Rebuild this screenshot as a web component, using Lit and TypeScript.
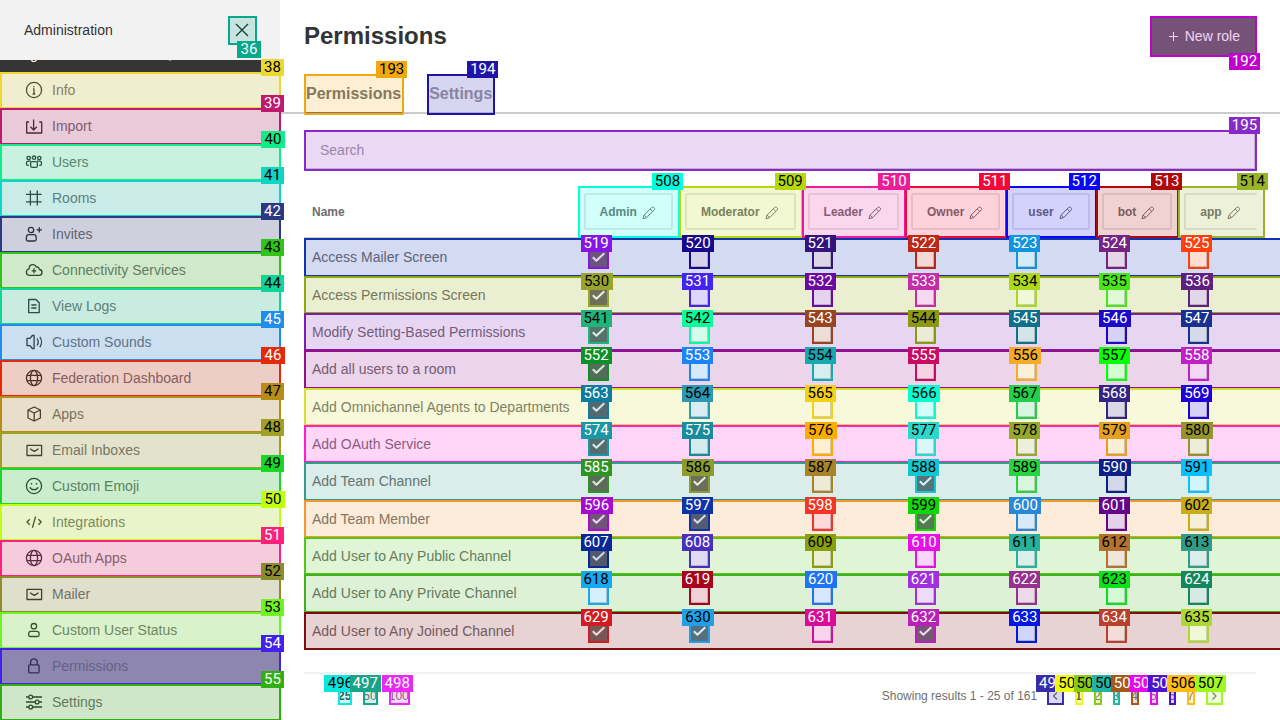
import { LitElement, html, css, svg, nothing } from "lit";
import { customElement } from "lit/decorators.js";
import { styleMap } from "lit/directives/style-map.js";
import { classMap } from "lit/directives/class-map.js";

const icons: Record<string, unknown> = {
  info: svg`<circle cx="10" cy="10" r="7.6"/><path d="M9 9h1v5M8.6 14h2.6M9.8 6v1.2"/>`,
  import: svg`<path d="M5 6H2.7v11h15V6h-2.4M9.6 3.5V14M6.4 10.8l3.2 3.2 3.2-3.2"/>`,
  users: svg`<circle cx="4.7" cy="6" r="1.7"/><circle cx="10" cy="5.7" r="1.7"/><circle cx="15.3" cy="6" r="1.7"/><rect x="6.6" y="9.6" width="6.8" height="5.8" rx="1.6"/><path d="M7 9.200H4.2c-1 0-1.7.7-1.7 1.700v1.200c0 .8.6 1.300 1.300 1.300h1M13 9.200h2.800c1 0 1.700.7 1.700 1.700v1.200c0 .8-.6 1.300-1.300 1.300h-1"/>`,
  hash: svg`<path d="M6.4 2.600v15M13.300 2.600v15M2 6.400h15.600M2 13.800h15.600"/>`,
  invite: svg`<circle cx="7" cy="6" r="2.700"/><path d="M4.600 10.700h5c1.600 0 2.600 1.200 2.600 2.800v2c0 .9-.6 1.500-1.500 1.500H3.900c-.9 0-1.500-.6-1.500-1.500v-2c0-1.600 1-2.800 2.200-2.800zM15.300 3.200v5.400M12.600 5.900H18"/>`,
  cloud: svg`<path d="M5.300 15.300h9.600a2.900 2.900 0 0 0 .4-5.800c.2-1.800-1.400-2.900-2.900-2.300C11.600 5.200 10 4.300 8.200 4.700 6.200 5.100 5 6.700 5.200 8.800c-1.600.2-2.800 1.500-2.800 3.300 0 1.900 1.200 3.200 2.900 3.200zM10 8.300v5M7.700 10.800h4.600"/>`,
  log: svg`<path d="M4.700 3.500h7.200l3.300 3.300v9.900H4.700zM7.300 9h5.200M7.300 12h5.200"/>`,
  sound: svg`<path d="M3 6.400h3l2.300-2.900h1.800v13H8.300L6 13.600H3zM13 6.500c1.400 2 1.400 5 0 7M15.800 4.800c2.200 3 2.200 7.400 0 10.400"/>`,
  globe: svg`<circle cx="10" cy="10" r="7.600"/><ellipse cx="10" cy="10" rx="3.600" ry="7.600"/><path d="M3 7.400h14M3 12.700h14"/>`,
  cube: svg`<path d="M10.200 3l6.200 3v8l-6.200 3L4 14V6zM4 6l6.200 3 6.200-3M10.200 9v8"/>`,
  mail: svg`<path d="M3 5.300h14.600v10.200H3zM6 8.700l4.300 2.700 4.300-2.700"/>`,
  emoji: svg`<circle cx="10" cy="10" r="7.600"/><path d="M7.500 7v1.500M12.500 7v1.500M5.900 11.300c1.200 3.200 7 3.200 8.200 0"/>`,
  code: svg`<path d="M5.800 7.200L3 10l2.800 2.800M14.400 7.200l2.800 2.800-2.800 2.800M11.600 4.500L8.400 15.700"/>`,
  user: svg`<circle cx="9.900" cy="6.200" r="2.700"/><path d="M7 11.300h5.800c1.400 0 2.300 1 2.300 2.400v1.300c0 .9-.6 1.500-1.500 1.500H6.200c-.9 0-1.500-.6-1.500-1.500v-1.300c0-1.400.9-2.400 2.300-2.400z"/>`,
  lock: svg`<rect x="4.700" y="8.800" width="10.400" height="8" rx="1"/><path d="M6.600 8.800V6.200a3.300 3.300 0 0 1 6.600 0v2.600"/>`,
  sliders: svg`<circle cx="6.700" cy="5" r="1.900"/><circle cx="13.100" cy="10" r="1.900"/><circle cx="6.700" cy="15" r="1.900"/><path d="M2 5h2.800M8.600 5H18M2 10h9.200M15 10h3M2 15h2.800M8.600 15H18"/>`,
};

const navItems: [number, string, string, string][] = [
  [38, "Info", "info", "#ecd830"],
  [39, "Import", "import", "#c0186c"],
  [40, "Users", "users", "#10ec88"],
  [41, "Rooms", "hash", "#10d4c4"],
  [42, "Invites", "invite", "#2c3884"],
  [43, "Connectivity Services", "cloud", "#30c418"],
  [44, "View Logs", "log", "#10d498"],
  [45, "Custom Sounds", "sound", "#208cec"],
  [46, "Federation Dashboard", "globe", "#e42808"],
  [47, "Apps", "cube", "#b88c18"],
  [48, "Email Inboxes", "mail", "#a0a024"],
  [49, "Custom Emoji", "emoji", "#18d828"],
  [50, "Integrations", "code", "#c0ff10"],
  [51, "OAuth Apps", "globe", "#ff207c"],
  [52, "Mailer", "mail", "#8c8c2c"],
  [53, "Custom User Status", "user", "#70f420"],
  [54, "Permissions", "lock", "#4420ec"],
  [55, "Settings", "sliders", "#30b010"],
];

const roles: [number, string, string][] = [
  [508, "Admin", "#00ffdc"],
  [509, "Moderator", "#b4d808"],
  [510, "Leader", "#ec1c98"],
  [511, "Owner", "#f40838"],
  [512, "user", "#0808f4"],
  [513, "bot", "#b00808"],
  [514, "app", "#98b428"],
];

// Row name, row colour, number of its first tick box, ticked columns, tick box colours
const rows: [string, string, number, number[], string[]][] = [
  ["Access Mailer Screen", "#1034b0", 519, [0], ["#8814e4", "#18088c", "#34147c", "#bc2818", "#1094e0", "#742480", "#ff400c"]],
  ["Access Permissions Screen", "#90a808", 530, [0], ["#98a42c", "#4424f0", "#6c08a4", "#c42ca8", "#acd81c", "#48e818", "#602080"]],
  ["Modify Setting-Based Permissions", "#7c1cb8", 541, [0], ["#1eb47c", "#0cfc9c", "#984420", "#8c9814", "#10708c", "#1c08c8", "#183090"]],
  ["Add all users to a room", "#941088", 552, [0], ["#0c9028", "#1c84f4", "#18a8b0", "#c80c64", "#f4ac28", "#08ff08", "#c020c8"]],
  ["Add Omnichannel Agents to Departments", "#d4e030", 563, [0], ["#0c7ca0", "#2c98b4", "#f4d018", "#08fcd0", "#20d048", "#342484", "#2000d8"]],
  ["Add OAuth Service", "#ff1cd0", 574, [0], ["#1898a4", "#188c9c", "#ffac00", "#2cd8cc", "#94a82c", "#e4a020", "#94942c"]],
  ["Add Team Channel", "#349c88", 585, [0, 1, 3], ["#309424", "#8c9c30", "#a88428", "#10c8d0", "#28d440", "#0c2088", "#08c0ff"]],
  ["Add Team Member", "#f0982c", 596, [0, 1, 3], ["#a40cd0", "#1034a8", "#f43424", "#10d808", "#2888d8", "#640488", "#c8ac18"]],
  ["Add User to Any Public Channel", "#50c81c", 607, [0], ["#082898", "#4830b8", "#88a00c", "#e810e8", "#28b09c", "#b07430", "#309c88"]],
  ["Add User to Any Private Channel", "#40b01c", 618, [], ["#18a8f0", "#a80420", "#2074f4", "#a030dc", "#983090", "#0ce018", "#14885c"]],
  ["Add User to Any Joined Channel", "#800c10", 629, [0, 1, 3], ["#d01c20", "#20a0e8", "#d80c98", "#b820b8", "#0018e0", "#b8402c", "#b0d834"]],
];

const pageColors = ["#ecfc10", "#88cc14", "#24b4a4", "#a4581c", "#e808ec", "#4c14c8", "#ffbc18"];

function tagInk(color: string) {
  const [r, g, b] = [1, 3, 5].map((i) => parseInt(color.slice(i, i + 2), 16));
  return 0.299 * r + 0.587 * g + 0.114 * b > 121 ? "#000" : "#fff";
}

/** Coloured outline with a numbered tag, laid over its positioned parent. */
function mark(color: string, id?: number, kind = "") {
  return html`<span class="box ${kind}" aria-hidden="true" style=${styleMap({ "--mark": color })}></span>${id === undefined
      ? nothing
      : html`<span
          aria-hidden="true"
          class=${classMap({ tag: true, short: id < 100, wide: id % 10 === 0 || id % 10 === 6, below: kind === "below" })}
          style=${styleMap({ "--mark": color, "--ink": tagInk(color) })}
          >${id}</span
        >`}`;
}

@customElement("app-root")
export class AppRoot extends LitElement {
  static styles = css`
    :host {
      display: flex;
      height: 100vh;
      overflow: hidden;
      background: #fff;
      color: #6e6e6e;
      font: 14px/20px "Liberation Sans", Arial, sans-serif;
    }
    * { box-sizing: border-box; }
    button, input { font: inherit; color: inherit; margin: 0; }
    button { border: 0; padding: 0; background: none; cursor: pointer; }
    svg { display: block; flex: none; fill: none; stroke: currentColor; stroke-width: 1.3; stroke-linejoin: round; }
    .marked { position: relative; }
    .box {
      position: absolute;
      inset: 0 -1px -1px 0;
      z-index: 1;
      border: 2px solid var(--mark);
      pointer-events: none;
    }
    .box::before {
      content: "";
      position: absolute;
      inset: 0;
      background: var(--mark);
      opacity: 0.18;
    }
    .box.over { z-index: 2; }
    .box.row { right: -24px; }
    .box.ruled { bottom: -3px; }
    .tag {
      position: absolute;
      top: -13px;
      left: calc(100% - 27px);
      z-index: 3;
      width: 31px;
      height: 17px;
      background: var(--mark);
      color: var(--ink);
      font: 15px/17px Roboto, sans-serif;
      text-align: center;
      pointer-events: none;
    }
    .tag.wide { width: 32px; }
    .tag.short { left: calc(100% - 19px); width: 23px; }
    .tag.short.wide { width: 24px; }
    .tag.below { top: calc(100% - 3px); }

    .side { flex: none; width: 280px; background: #f2f2f2; }
    .side-head {
      display: flex;
      align-items: flex-start;
      justify-content: space-between;
      height: 60px;
      padding: 16px 24px;
      color: #333;
    }
    .side-title { margin: 0; font: inherit; line-height: 28px; }
    .close { display: grid; place-items: center; width: 28px; height: 28px; color: #222; background: #f2f2f2; }
    .banner {
      display: flex;
      justify-content: space-between;
      height: 12px;
      padding: 0 108px 0 30px;
      overflow: hidden;
      background: #353535;
      color: #fff;
      align-items: flex-end;
      line-height: 36px;
    }
    .nav { margin: 0; padding: 0; list-style: none; }
    .nav-link {
      display: flex;
      align-items: center;
      gap: 8px;
      height: 36px;
      padding: 0 24px;
      color: inherit;
      text-decoration: none;
    }
    .nav-link svg { color: #303030; }
    .nav-link.current { background: #9e9ea2; }

    .main { flex: 1; min-width: 0; overflow: hidden; }
    .head { display: flex; justify-content: space-between; align-items: center; padding: 16px 24px 18px; }
    .title { margin: 0; font-size: 24px; line-height: 32px; color: #333; }
    .new-role {
      display: flex;
      align-items: center;
      gap: 3px;
      height: 40px;
      padding: 0 16px;
      background: #656565;
      color: #fff;
    }
    .new-role svg, .chip svg { stroke-width: 1; }
    .tabs { display: flex; gap: 24px; padding: 0 24px; border-bottom: 2px solid #ccc; }
    .tab {
      height: 40px;
      margin-bottom: -2px;
      padding: 2px 2px 0;
      border-bottom: 2px solid transparent;
      font-size: 16px;
      font-weight: 700;
      color: #9d9da4;
    }
    .tab.on { color: #6e6e6e; border-color: #6e6e6e; }
    .body { padding: 16px 24px 0; }
    .search { display: block; }
    .search-input {
      display: block;
      width: 100%;
      height: 40px;
      padding: 0 14px;
      border: 2px solid #ccc;
      outline: 0;
      background: #fff;
    }
    .search-input::placeholder { color: #9d9da4; opacity: 1; }

    .grid { width: calc(100% + 6px); margin-top: 16px; border-collapse: separate; border-spacing: 0; }
    .grid th { text-align: left; }
    .grid thead th { height: 52px; padding: 0 6px; border-bottom: 1px solid #ccc; font-size: 12px; line-height: 16px; }
    .grid thead .name { width: 100%; padding: 0 8px; }
    .chip {
      display: flex;
      align-items: center;
      gap: 4px;
      height: 37px;
      padding: 0 14px;
      border: 2px solid #e6e6e6;
      border-radius: 2px;
      font-weight: 700;
    }
    th:last-child .chip { border-right-color: transparent; }
    .grid tbody tr { height: 37px; }
    .grid tbody tr:nth-child(3n + 1) { height: 38px; }
    .grid tbody th { padding: 0 8px; font-weight: 400; white-space: nowrap; }
    .grid td { padding: 10px 0 0 10px; vertical-align: top; }
    .tick { display: block; position: relative; width: 20px; height: 20px; }
    .tick-input {
      appearance: none;
      display: block;
      position: relative;
      z-index: 2;
      width: 20px;
      height: 20px;
      border: 2px solid #ccc;
      background: #fff;
    }
    .tick-input:checked { border-color: #656565; background: #656565; }
    .tick svg { position: absolute; inset: 0; z-index: 2; color: #fff; stroke-width: 2; }

    .foot {
      display: flex;
      align-items: center;
      justify-content: space-between;
      margin-top: 23px;
      padding: 14px 34px;
      border-top: 2px solid #f2f2f2;
      font-size: 12px;
      line-height: 16px;
    }
    .pages { display: flex; gap: 12px; }
    .pages button { display: block; height: 16px; }
    .pages .now { font-weight: 700; color: #444; }
    .results { display: flex; gap: 10px; }
  `;

  render() {
    return html`
      <aside class="side">
        <header class="side-head">
          <h2 class="side-title">Administration</h2>
          <button class="close marked" aria-label="Close">
            <svg width="20" height="20" viewBox="0 0 20 20"><path d="M4 4l12 12M16 4L4 16" /></svg>
            ${mark("#08a88c", 36, "below")}
          </button>
        </header>
        <div class="banner"><span>g</span><span>,</span></div>
        <ul class="nav">
          ${navItems.map(
            ([id, label, icon, color]) => html`<li>
              <a href="#" class=${classMap({ "nav-link": true, marked: true, current: id === 54 })}>
                <svg width="20" height="20" viewBox="0 0 20 20">${icons[icon]}</svg>${label}${mark(color, id)}
              </a>
            </li>`
          )}
        </ul>
      </aside>
      <main class="main">
        <header class="head">
          <h1 class="title">Permissions</h1>
          <button class="new-role marked">
            <svg width="16" height="16" viewBox="0 0 16 16"><path d="M7.500 4v9M3 8.500h9" /></svg>New role
            ${mark("#c000cc", 192, "below")}
          </button>
        </header>
        <nav class="tabs">
          <button class="tab on marked">Permissions${mark("#f0a810", 193, "ruled")}</button>
          <button class="tab marked">Settings${mark("#2014a4", 194, "ruled")}</button>
        </nav>
        <div class="body">
          <label class="search marked">
            <input class="search-input" type="text" placeholder="Search" aria-label="Search" />
            ${mark("#8828c8", 195)}
          </label>
          <table class="grid">
            <thead>
              <tr>
                <th class="name" scope="col">Name</th>
                ${roles.map(
                  ([id, label, color]) => html`<th class="marked" scope="col">
                    <button class="chip">
                      ${label}
                      <svg width="16" height="16" viewBox="0 0 16 16">
                        <path d="M3 11.200l7.600-7.700c1.400-1.400 4 .9 2.600 2.500l-7.600 7.700-3.600 1zM9.200 5l2.600 2.500M3.200 11.200l2.500 2.400" />
                      </svg>
                    </button>
                    ${mark(color, id)}
                  </th>`
                )}
              </tr>
            </thead>
            <tbody>
              ${rows.map(
                ([name, color, first, ticked, colors]) => html`<tr class="marked">
                  <th scope="row">${name}${mark(color, undefined, "row")}</th>
                  ${colors.map(
                    (c, i) => html`<td>
                      <label class="tick">
                        <input class="tick-input" type="checkbox" aria-label="${name}: ${roles[i][1]}" ?checked=${ticked.includes(i)} />
                        ${ticked.includes(i)
                          ? html`<svg width="20" height="20" viewBox="0 0 20 20"><path d="M4.800 9.200l3.600 3.600L16.300 5.200" /></svg>`
                          : nothing}
                        ${mark(c, first + i, "over")}
                      </label>
                    </td>`
                  )}
                </tr>`
              )}
            </tbody>
          </table>
          <footer class="foot">
            <div class="pages">
              <button class="now marked">25${mark("#08e8e0", 496)}</button>
              <button class="marked">50${mark("#18a488", 497)}</button>
              <button class="marked">100${mark("#e828f4", 498)}</button>
            </div>
            <div class="results">
              <span>Showing results 1 - 25 of 161</span>
              <div class="pages">
                <button class="marked" aria-label="Previous page">
                  <svg width="16" height="16" viewBox="0 0 16 16"><path d="M10 4.500L6.500 8l3.500 3.500" /></svg>${mark("#382ca8", 499)}
                </button>
                ${pageColors.map(
                  (c, i) => html`<button class=${classMap({ marked: true, now: i === 0 })}>${i + 1}${mark(c, 500 + i)}</button>`
                )}
                <button class="marked" aria-label="Next page">
                  <svg width="16" height="16" viewBox="0 0 16 16"><path d="M6.500 4.500L10 8l-3.500 3.500" /></svg>${mark("#a0f820", 507)}
                </button>
              </div>
            </div>
          </footer>
        </div>
      </main>
    `;
  }
}
